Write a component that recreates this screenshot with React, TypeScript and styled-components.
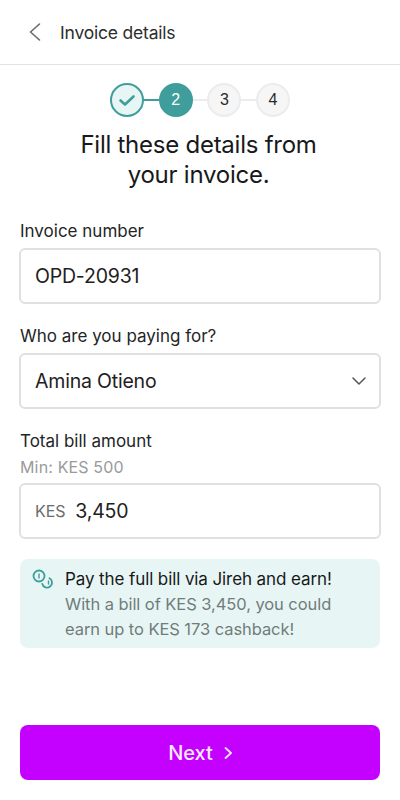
import React from 'react'
import styled, { createGlobalStyle } from 'styled-components'

const GlobalStyle = createGlobalStyle`
  html, body {
    margin: 0;
    padding: 0;
    background: #fff;
  }
  * {
    box-sizing: border-box;
  }
`

const Page = styled.div`
  width: 400px;
  height: 800px;
  display: flex;
  flex-direction: column;
  font-family: Inter, "Noto Sans", sans-serif;
  color: #1b1d1e;
  overflow: hidden;
`

const Header = styled.header`
  height: 65px;
  flex-shrink: 0;
  display: flex;
  align-items: center;
  gap: 17px;
  padding-left: 25px;
  border-bottom: 1px solid #e3e3e3;
`

const BackIcon = styled.svg`
  width: 18px;
  height: 20px;
  fill: none;
  stroke: #6a6a6a;
  stroke-width: 1.6;
  stroke-linecap: round;
  stroke-linejoin: round;
`

const HeaderTitle = styled.h1`
  margin: 0;
  font-size: 17.5px;
  font-weight: 400;
  letter-spacing: -0.2px;
  color: #2c2e2f;
`

const Stepper = styled.div`
  display: flex;
  justify-content: center;
  align-items: center;
  margin-top: 18px;
`

const Step = styled.div<{ $state: 'done' | 'active' | 'todo' }>`
  width: 34px;
  height: 34px;
  border-radius: 50%;
  display: flex;
  align-items: center;
  justify-content: center;
  font-size: 16px;
  font-family: "Liberation Sans", Arial, sans-serif;
  border: 2px solid ${p => (p.$state === 'todo' ? '#ececec' : '#3f9d9b')};
  background: ${p =>
    p.$state === 'done' ? '#e7f6f5' : p.$state === 'active' ? '#3f9d9b' : '#f6f6f6'};
  color: ${p => (p.$state === 'active' ? '#fff' : '#2a2a2a')};
`

const Connector = styled.div<{ $on?: boolean }>`
  width: 14.67px;
  height: 2px;
  background: ${p => (p.$on ? '#3f9d9b' : '#ececec')};
`

const CheckIcon = styled.svg`
  width: 18px;
  height: 18px;
  fill: none;
  stroke: #3f9d9b;
  stroke-width: 2.6;
  stroke-linecap: round;
  stroke-linejoin: round;
`

const Title = styled.h2`
  margin: 13px 0 0;
  padding-right: 3px;
  text-align: center;
  font-size: 24px;
  line-height: 30px;
  font-weight: 430;
  letter-spacing: -0.25px;
  color: #17191a;
`

const Form = styled.div`
  display: flex;
  flex-direction: column;
  gap: 21px;
  padding: 0 19px;
  margin-top: 30px;
`

const Field = styled.div`
  display: flex;
  flex-direction: column;
`

const Label = styled.label`
  font-size: 17px;
  line-height: 22px;
  font-weight: 430;
  color: #232526;
  padding-left: 1px;
  margin-bottom: 6px;
`

const TightLabel = styled(Label)`
  margin-bottom: 5px;
`

const Hint = styled.div`
  font-size: 16px;
  line-height: 20px;
  letter-spacing: 0.15px;
  color: #999a9b;
  padding-left: 1px;
  margin-bottom: 6px;
`

const Box = styled.div`
  height: 56px;
  border: 2px solid #e0e0e0;
  border-radius: 6px;
  display: flex;
  align-items: center;
  padding: 0 13px 0 14px;
  font-size: 19.5px;
  letter-spacing: -0.2px;
  color: #1e2021;
  background: #fff;
`

const BoxText = styled.span`
  flex: 1;
`

const Chevron = styled.svg`
  width: 16px;
  height: 16px;
  fill: none;
  stroke: #555;
  stroke-width: 1.5;
  stroke-linecap: round;
  stroke-linejoin: round;
`

const Prefix = styled.span`
  font-size: 16px;
  color: #6a6c6d;
  letter-spacing: -0.1px;
  margin-right: 10px;
`

const Banner = styled.div`
  margin: 20px 20px 0;
  height: 89px;
  padding: 8px 10px 0 12px;
  background: #e7f6f4;
  border-radius: 8px;
  display: flex;
  gap: 12px;
`

const CoinIcon = styled.svg`
  width: 21px;
  height: 21px;
  flex-shrink: 0;
  margin-top: 1px;
  fill: none;
  stroke: #3f9d9b;
  stroke-width: 1.8;
  stroke-linecap: round;
`

const BannerText = styled.div`
  font-size: 16.5px;
  line-height: 25px;
  letter-spacing: -0.07px;
  color: #717c7b;
`

const BannerLead = styled.div`
  font-size: 17px;
  font-weight: 430;
  letter-spacing: -0.1px;
  color: #17191a;
`

const NextButton = styled.button`
  margin: auto 20px 20px;
  height: 55px;
  border: none;
  border-radius: 8px;
  background: #c400ff;
  color: #fbeaff;
  font-family: inherit;
  font-size: 20px;
  font-weight: 450;
  display: flex;
  align-items: center;
  justify-content: center;
  gap: 11px;
`

const NextIcon = styled.svg`
  width: 8px;
  height: 14px;
  fill: none;
  stroke: #fbeaff;
  stroke-width: 1.8;
  stroke-linecap: round;
  stroke-linejoin: round;
`

export default function App() {
  return (
    <>
      <GlobalStyle />
      <Page>
        <Header>
          <BackIcon viewBox="0 0 18 20">
            <path d="M14.5 2 L5.5 10 L14.5 18" />
          </BackIcon>
          <HeaderTitle>Invoice details</HeaderTitle>
        </Header>

        <Stepper>
          <Step $state="done">
            <CheckIcon viewBox="0 0 18 18">
              <path d="M2.5 9.5 L7 13.5 L15.5 5.5" />
            </CheckIcon>
          </Step>
          <Connector $on />
          <Step $state="active">2</Step>
          <Connector />
          <Step $state="todo">3</Step>
          <Connector />
          <Step $state="todo">4</Step>
        </Stepper>

        <Title>
          Fill these details from
          <br />
          your invoice.
        </Title>

        <Form>
          <Field>
            <Label>Invoice number</Label>
            <Box>OPD-20931</Box>
          </Field>
          <Field>
            <Label>Who are you paying for?</Label>
            <Box>
              <BoxText>Amina Otieno</BoxText>
              <Chevron viewBox="0 0 16 16">
                <path d="M3 5 L9 11 L15 5" />
              </Chevron>
            </Box>
          </Field>
          <Field>
            <TightLabel>Total bill amount</TightLabel>
            <Hint>Min: KES 500</Hint>
            <Box>
              <Prefix>KES</Prefix>
              3,450
            </Box>
          </Field>
        </Form>

        <Banner>
          <CoinIcon viewBox="0 0 21 21">
            <circle cx="7" cy="8" r="5.5" />
            <path d="M7 6 V10" strokeWidth="1.4" />
            <path d="M17.5 10.2 A5 5 0 1 1 10.2 15.8" />
            <path d="M16.5 13 V16" strokeWidth="1.4" />
          </CoinIcon>
          <BannerText>
            <BannerLead>Pay the full bill via Jireh and earn!</BannerLead>
            With a bill of KES 3,450, you could
            <br />
            earn up to KES 173 cashback!
          </BannerText>
        </Banner>

        <NextButton>
          Next
          <NextIcon viewBox="0 0 8 14">
            <path d="M1.5 2 L7 7 L1.5 12" />
          </NextIcon>
        </NextButton>
      </Page>
    </>
  )
}
